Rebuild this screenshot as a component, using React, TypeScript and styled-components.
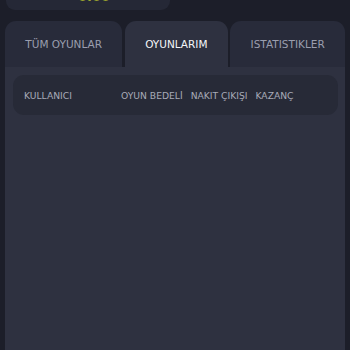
import styled, { createGlobalStyle } from "styled-components";

const GlobalStyle = createGlobalStyle`
  html, body {
    margin: 0;
    padding: 0;
    background: #1c1e29;
    font-family: "DejaVu Sans", sans-serif;
  }
`;

const Page = styled.div`
  width: 350px;
  height: 350px;
  overflow: hidden;
  display: flex;
  flex-direction: column;
`;

const BalanceCard = styled.div`
  margin: -24px 0 0 6px;
  width: 164px;
  height: 34px;
  background: #252836;
  border-radius: 0 0 9px 9px;
  display: flex;
  align-items: flex-end;
  justify-content: center;
  overflow: hidden;
`;

const BalanceValue = styled.span`
  font-size: 13px;
  font-weight: bold;
  color: #9ca42f;
  line-height: 13px;
  margin-bottom: 7.4px;
  margin-left: 12px;
`;

const Tabs = styled.div`
  display: flex;
  gap: 2.5px;
  margin: 10.7px 5px 0 5px;
`;

const Tab = styled.div<{ $active?: boolean }>`
  flex: 1 1 auto;
  height: 46.5px;
  display: flex;
  align-items: center;
  justify-content: center;
  border-radius: 11px 11px 0 0;
  background: ${(p) => (p.$active ? "#2e3140" : "#282b3a")};
  color: ${(p) => (p.$active ? "#f4f5f8" : "#9a9eae")};
  font-size: 10.5px;
  white-space: nowrap;
`;

const Panel = styled.div`
  flex: 1;
  margin: 0 5px;
  background: #2e3140;
  padding: 8px 7.5px;
`;

const HeaderRow = styled.div`
  height: 40px;
  display: flex;
  align-items: center;
  gap: 8px;
  padding: 0 44px 0 11.5px;
  background: #272a37;
  border-radius: 11px;
  color: #a7abb8;
  font-size: 9.2px;
  white-space: nowrap;
`;

const HeaderCell = styled.span<{ $grow?: boolean }>`
  flex: ${(p) => (p.$grow ? "1 1 auto" : "0 0 auto")};
`;

export default function App() {
  return (
    <Page>
      <GlobalStyle />
      <BalanceCard>
        <BalanceValue>0.00</BalanceValue>
      </BalanceCard>
      <Tabs>
        <Tab>TÜM OYUNLAR</Tab>
        <Tab $active>OYUNLARIM</Tab>
        <Tab>ISTATISTIKLER</Tab>
      </Tabs>
      <Panel>
        <HeaderRow>
          <HeaderCell $grow>KULLANICI</HeaderCell>
          <HeaderCell>OYUN BEDELİ</HeaderCell>
          <HeaderCell>NAKIT ÇIKIŞI</HeaderCell>
          <HeaderCell>KAZANÇ</HeaderCell>
        </HeaderRow>
      </Panel>
    </Page>
  );
}
